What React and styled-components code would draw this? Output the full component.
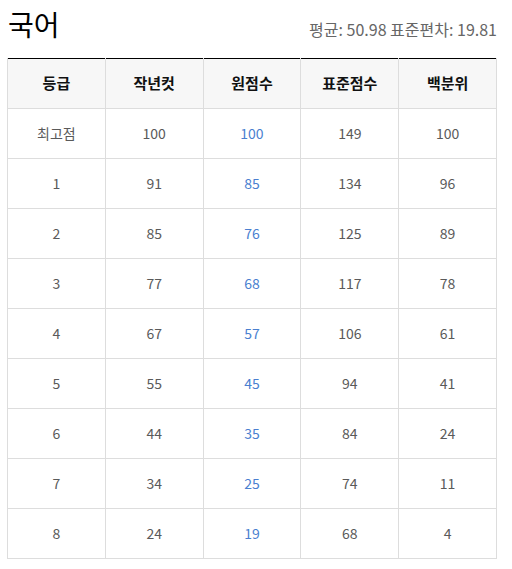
import React from 'react';
import styled, { createGlobalStyle } from 'styled-components';

const GlobalStyle = createGlobalStyle`
  body {
    margin: 0;
    background: #fff;
    font-family: "Noto Sans CJK KR", "Noto Sans", sans-serif;
  }
`;

const rows = [
  ['최고점', 100, 100, 149, 100],
  [1, 91, 85, 134, 96],
  [2, 85, 76, 125, 89],
  [3, 77, 68, 117, 78],
  [4, 67, 57, 106, 61],
  [5, 55, 45, 94, 41],
  [6, 44, 35, 84, 24],
  [7, 34, 25, 74, 11],
  [8, 24, 19, 68, 4],
];

const heads = ['등급', '작년컷', '원점수', '표준점수', '백분위'];

const App = () => {
  return (
    <Wrap>
      <GlobalStyle />
      <Top>
        <Title>국어</Title>
        <Stats>평균: 50.98 표준편차: 19.81</Stats>
      </Top>
      <Table>
        <thead>
          <tr>
            {heads.map((h) => (
              <Th key={h}>{h}</Th>
            ))}
          </tr>
        </thead>
        <tbody>
          {rows.map((r, i) => (
            <tr key={i}>
              {r.map((v, j) => (
                <Td key={j} $blue={j === 2}>{v}</Td>
              ))}
            </tr>
          ))}
        </tbody>
      </Table>
    </Wrap>
  );
};

const Wrap = styled.div`
  width: 490px;
  margin-left: 7px;
  padding-top: 4px;
`;

const Top = styled.div`
  display: flex;
  justify-content: space-between;
  align-items: baseline;
  height: 54px;
  padding-left: 1px;
`;

const Title = styled.h2`
  margin: 0;
  font-size: 28px;
  font-weight: 400;
  color: #000;
  line-height: 40px;
`;

const Stats = styled.span`
  font-size: 16px;
  color: #666;
`;

const Table = styled.table`
  width: 490px;
  border-collapse: collapse;
  table-layout: fixed;
  border-top: 1px solid #000;
`;

const Th = styled.th`
  height: 47px;
  padding: 0 0 2px;
  background: #f7f7f7;
  border: 1px solid #ddd;
  border-top: none;
  font-size: 15px;
  font-weight: 700;
  color: #111;
  text-align: center;
`;

const Td = styled.td`
  height: 47px;
  padding: 0 0 2px;
  border: 1px solid #ddd;
  font-size: 14px;
  color: ${(p) => (p.$blue ? '#4a7fd0' : '#5a5a5a')};
  text-align: center;
`;

export default App;
